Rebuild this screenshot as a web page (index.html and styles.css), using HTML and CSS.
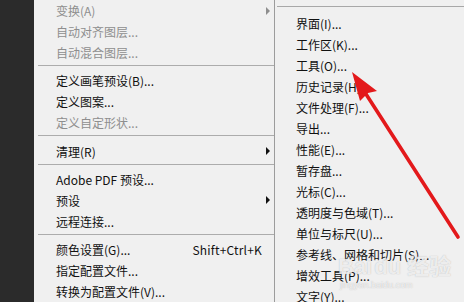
FILE: index.html
```html
<!DOCTYPE html>
<html lang="zh-CN">
<head>
<meta charset="utf-8">
<title>首选项菜单</title>
<link rel="stylesheet" href="styles.css">
</head>
<body>
<div class="screen">
  <div class="dark"></div>
  <div class="menu main">
    <div class="item disabled"><span class="label">变换(A)</span><span class="sub-arrow"></span></div>
    <div class="item disabled"><span class="label">自动对齐图层...</span></div>
    <div class="item disabled"><span class="label">自动混合图层...</span></div>
    <div class="sep"></div>
    <div class="item"><span class="label">定义画笔预设(B)...</span></div>
    <div class="item"><span class="label">定义图案...</span></div>
    <div class="item disabled"><span class="label">定义自定形状...</span></div>
    <div class="sep"></div>
    <div class="item"><span class="label">清理(R)</span><span class="sub-arrow"></span></div>
    <div class="sep"></div>
    <div class="item"><span class="label">Adobe PDF 预设...</span></div>
    <div class="item"><span class="label">预设</span><span class="sub-arrow"></span></div>
    <div class="item"><span class="label">远程连接...</span></div>
    <div class="sep"></div>
    <div class="item"><span class="label">颜色设置(G)...</span><span class="shortcut">Shift+Ctrl+K</span></div>
    <div class="item"><span class="label">指定配置文件...</span></div>
    <div class="item"><span class="label">转换为配置文件(V)...</span></div>
  </div>
  <div class="menu sub">
    <div class="item"><span class="label">界面(I)...</span></div>
    <div class="item"><span class="label">工作区(K)...</span></div>
    <div class="item"><span class="label">工具(O)...</span></div>
    <div class="item"><span class="label">历史记录(H)...</span></div>
    <div class="item"><span class="label">文件处理(F)...</span></div>
    <div class="item"><span class="label">导出...</span></div>
    <div class="item"><span class="label">性能(E)...</span></div>
    <div class="item"><span class="label">暂存盘...</span></div>
    <div class="item"><span class="label">光标(C)...</span></div>
    <div class="item"><span class="label">透明度与色域(T)...</span></div>
    <div class="item"><span class="label">单位与标尺(U)...</span></div>
    <div class="item"><span class="label">参考线、网格和切片(S)...</span></div>
    <div class="item"><span class="label">增效工具(P)...</span></div>
    <div class="item"><span class="label">文字(Y)...</span></div>
  </div>
  <div class="watermark">
    <div class="wm-logo">Bai<span class="wm-paw">du</span> 经验</div>
    <div class="wm-url">jingyan.baidu.com</div>
  </div>
  <svg class="arrow" width="464" height="302" viewBox="0 0 464 302" aria-hidden="true">
    <line x1="458" y1="237" x2="364" y2="91" stroke="#e3191b" stroke-width="3.6" stroke-linecap="round"/>
    <path d="M352 72 L377 91 L368 93 L360 101 Z" fill="#e3191b"/>
  </svg>
</div>
</body>
</html>
```
FILE: styles.css
```css
html, body {
  margin: 0;
  padding: 0;
  background: #f0f0f0;
}

.screen {
  position: relative;
  display: flex;
  width: 464px;
  height: 302px;
  overflow: hidden;
  background: #f0f0f0;
  font-family: "Noto Sans CJK SC", "Noto Sans", sans-serif;
  font-size: 12px;
  color: #111;
}

.dark {
  flex: 0 0 34px;
  background: #2b2b2b;
}

.menu {
  display: flex;
  flex-direction: column;
}

.main {
  flex: 0 0 240px;
  border-right: 1px solid #9c9c9c;
}

.sub {
  flex: 1;
  margin-left: 2px;
  margin-top: 6px;
  padding-top: 6px;
  border-top: 1px solid #a8a8a8;
}

.item {
  display: flex;
  align-items: center;
  height: 21px;
  line-height: 21px;
  white-space: nowrap;
}

.main .item {
  padding-left: 22px;
  padding-right: 4px;
}

.sub .item {
  padding-left: 19px;
}

.item.disabled {
  color: #8e8e8e;
}

.sep {
  height: 8px;
  margin-left: 4px;
  box-sizing: border-box;
  padding-top: 2px;
}

.sep::before {
  content: "";
  display: block;
  height: 1px;
  background: #acacac;
}

.sub-arrow {
  margin-left: auto;
  width: 0;
  height: 0;
  border-left: 4px solid #111;
  border-top: 4px solid transparent;
  border-bottom: 4px solid transparent;
}

.disabled .sub-arrow {
  border-left-color: #8e8e8e;
}

.shortcut {
  margin-left: auto;
  padding-right: 8px;
  letter-spacing: 0.2px;
}

.watermark {
  position: absolute;
  left: 338px;
  top: 254px;
  color: rgba(255, 255, 255, 0.75);
  text-shadow: 0 0 1px rgba(120, 120, 120, 0.5);
  font-family: "Liberation Sans", "Noto Sans CJK SC", sans-serif;
}

.wm-logo {
  font-size: 22px;
  font-weight: bold;
  line-height: 26px;
}

.wm-paw {
  margin-left: 2px;
}

.wm-url {
  font-size: 9px;
  line-height: 10px;
  padding-left: 2px;
}

.arrow {
  position: absolute;
  left: 0;
  top: 0;
}
```
